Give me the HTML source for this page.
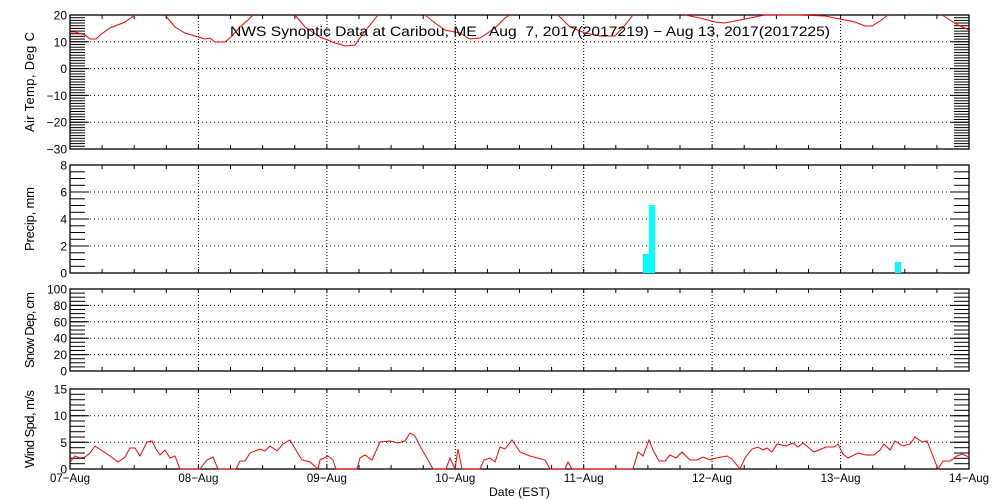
<!DOCTYPE html>
<html><head><meta charset="utf-8"><style>
html,body{margin:0;padding:0;background:#fff;width:1000px;height:500px;overflow:hidden}
svg{display:block}
text{font-family:"Liberation Sans",sans-serif;fill:#000}
</style></head><body>
<svg id="s" width="1000" height="500" xmlns="http://www.w3.org/2000/svg"></svg>
<script>
const s=document.getElementById('s');let h='';
const X0=70,X1=969,DW=(X1-X0)/7;
const panels=[
 {t:15,b:149,min:-30,max:20,maj:10,minr:1,lab:'Air Temp, Deg C',len:100},
 {t:165,b:273,min:0,max:8,maj:2,minr:0.5,lab:'Precip, mm',len:64},
 {t:289,b:371,min:0,max:100,maj:20,minr:5,lab:'Snow Dep, cm',len:76},
 {t:389,b:469,min:0,max:15,maj:5,minr:1,lab:'Wind Spd, m/s',len:78}];
panels.forEach(p=>{
 const Y=v=>p.b-(v-p.min)*(p.b-p.t)/(p.max-p.min);
 for(let d=1;d<7;d++){const x=(X0+d*DW).toFixed(1);h+=`<line x1="${x}" y1="${p.t}" x2="${x}" y2="${p.b}" stroke="#000" stroke-dasharray="1,2"/>`;}
 for(let q=1;q<28;q++){const x=(X0+q*DW/4).toFixed(1);h+=`<line x1="${x}" y1="${p.t}" x2="${x}" y2="${p.t+4}" stroke="#000"/><line x1="${x}" y1="${p.b}" x2="${x}" y2="${p.b-4}" stroke="#000"/>`;}
 for(let v=p.min;v<=p.max+1e-9;v+=p.minr){const y=Y(v).toFixed(1);h+=`<line x1="${X0}" y1="${y}" x2="${X0+15}" y2="${y}" stroke="#000"/><line x1="${X1-15}" y1="${y}" x2="${X1}" y2="${y}" stroke="#000"/>`;}
 for(let v=p.min;v<=p.max+1e-9;v+=p.maj){const y=Y(v).toFixed(1);
  if(v>p.min&&v<p.max)h+=`<line x1="${X0}" y1="${y}" x2="${X1}" y2="${y}" stroke="#000" stroke-dasharray="1,3"/>`;
  h+=`<line x1="${X0}" y1="${y}" x2="${X0+19}" y2="${y}" stroke="#000"/><line x1="${X1-19}" y1="${y}" x2="${X1}" y2="${y}" stroke="#000"/>`;
  const lbl=v<0?'\u2212'+(-v):''+v;
  h+=`<text x="${X0-3}" y="${(+y+4.5).toFixed(1)}" font-size="12" text-anchor="end">${lbl}</text>`;}
 h+=`<rect x="${X0}" y="${p.t}" width="${X1-X0}" height="${p.b-p.t}" fill="none" stroke="#000" stroke-width="1.3"/>`;
 const cy=(p.t+p.b)/2;
 h+=`<text x="34" y="${cy}" font-size="13" text-anchor="middle" textLength="${p.len}" lengthAdjust="spacing" transform="rotate(-90 34 ${cy})">${p.lab}</text>`;
});
h+=`<rect x="643" y="254" width="6" height="19" fill="#0ff"/><rect x="649" y="205" width="6" height="68" fill="#0ff"/><rect x="895" y="262" width="6" height="11" fill="#0ff"/>`;
const segs=[
[[70,32],[75,32],[85,35],[90,39],[96,39],[100,35],[110,28],[125,22],[132,17],[135,15]],
[[165,15],[175,27],[185,33],[195,36],[205,39],[210,38],[215,42],[225,42],[232,36],[240,27],[248,20],[253,15]],
[[295,15],[305,27],[320,37],[335,43],[345,46],[355,45],[362,35],[370,25],[378,15]],
[[425,15],[435,23],[445,30],[455,32],[460,33],[470,39],[480,38],[495,28],[505,18],[510,15]],
[[558,15],[570,27],[585,33],[600,36],[615,36],[625,25],[633,15]],
[[685,15],[700,18],[715,22],[725,23],[740,20],[755,17],[765,15],[800,15],[825,16],[840,19],[855,22],[865,26],[872,26],[880,21],[888,15]],
[[942,15],[950,20],[958,25],[965,28],[969,30]]];
segs.forEach(sg=>{h+=`<polyline fill="none" stroke="#f00" points="${sg.map(p=>p.join(',')).join(' ')}"/>`;});
const w=[[70,462],[75,456],[80,458],[85,457],[90,453],[95,446],[110,456],[118,462],[125,457],[130,448],[135,448],[140,456],[147,442],[152,441],[156,449],[160,455],[165,450],[170,458],[175,456],[180,469],[200,469],[207,460],[213,457],[218,469],[236,469],[240,461],[245,461],[250,453],[260,449],[265,451],[270,446],[277,451],[283,444],[290,440],[297,452],[302,460],[310,462],[318,469],[320,460],[328,456],[333,460],[336,469],[357,469],[360,458],[365,455],[372,460],[380,442],[390,441],[398,443],[405,441],[410,433],[415,436],[420,446],[428,460],[433,469],[446,469],[450,458],[455,469],[458,449],[462,469],[480,469],[484,460],[490,458],[495,462],[500,447],[505,449],[512,440],[520,452],[530,456],[545,460],[550,469],[565,469],[568,462],[572,469],[633,469],[638,452],[643,456],[649,440],[653,450],[659,461],[665,461],[670,455],[676,458],[682,452],[690,460],[697,460],[703,457],[710,460],[716,458],[727,456],[732,459],[740,469],[745,458],[752,449],[758,447],[763,450],[767,448],[772,452],[777,444],[786,446],[793,443],[798,447],[803,443],[814,452],[826,447],[834,447],[838,444],[843,454],[848,458],[858,453],[866,455],[874,455],[880,450],[884,444],[890,450],[895,441],[903,446],[910,444],[915,437],[922,442],[927,441],[938,469],[943,461],[950,461],[957,456],[962,454],[969,457]];
h+=`<polyline fill="none" stroke="#f00" points="${w.map(p=>p.join(',')).join(' ')}"/>`;
const days=['07-Aug','08-Aug','09-Aug','10-Aug','11-Aug','12-Aug','13-Aug','14-Aug'];
days.forEach((d,i)=>{const x=X0+i*DW;h+=`<text x="${(x-20).toFixed(1)}" y="482" font-size="12" textLength="40" lengthAdjust="spacingAndGlyphs">${d.replace('-','\u2212')}</text>`;});
h+=`<text x="489" y="496" font-size="12" textLength="61" lengthAdjust="spacingAndGlyphs">Date (EST)</text>`;
h+=`<text x="230" y="36" font-size="14" textLength="600" lengthAdjust="spacingAndGlyphs" xml:space="preserve" style="white-space:pre">NWS Synoptic Data at Caribou, ME   Aug  7, 2017(2017219) \u2212 Aug 13, 2017(2017225)</text>`;
s.innerHTML=h;
</script>
</body></html>
